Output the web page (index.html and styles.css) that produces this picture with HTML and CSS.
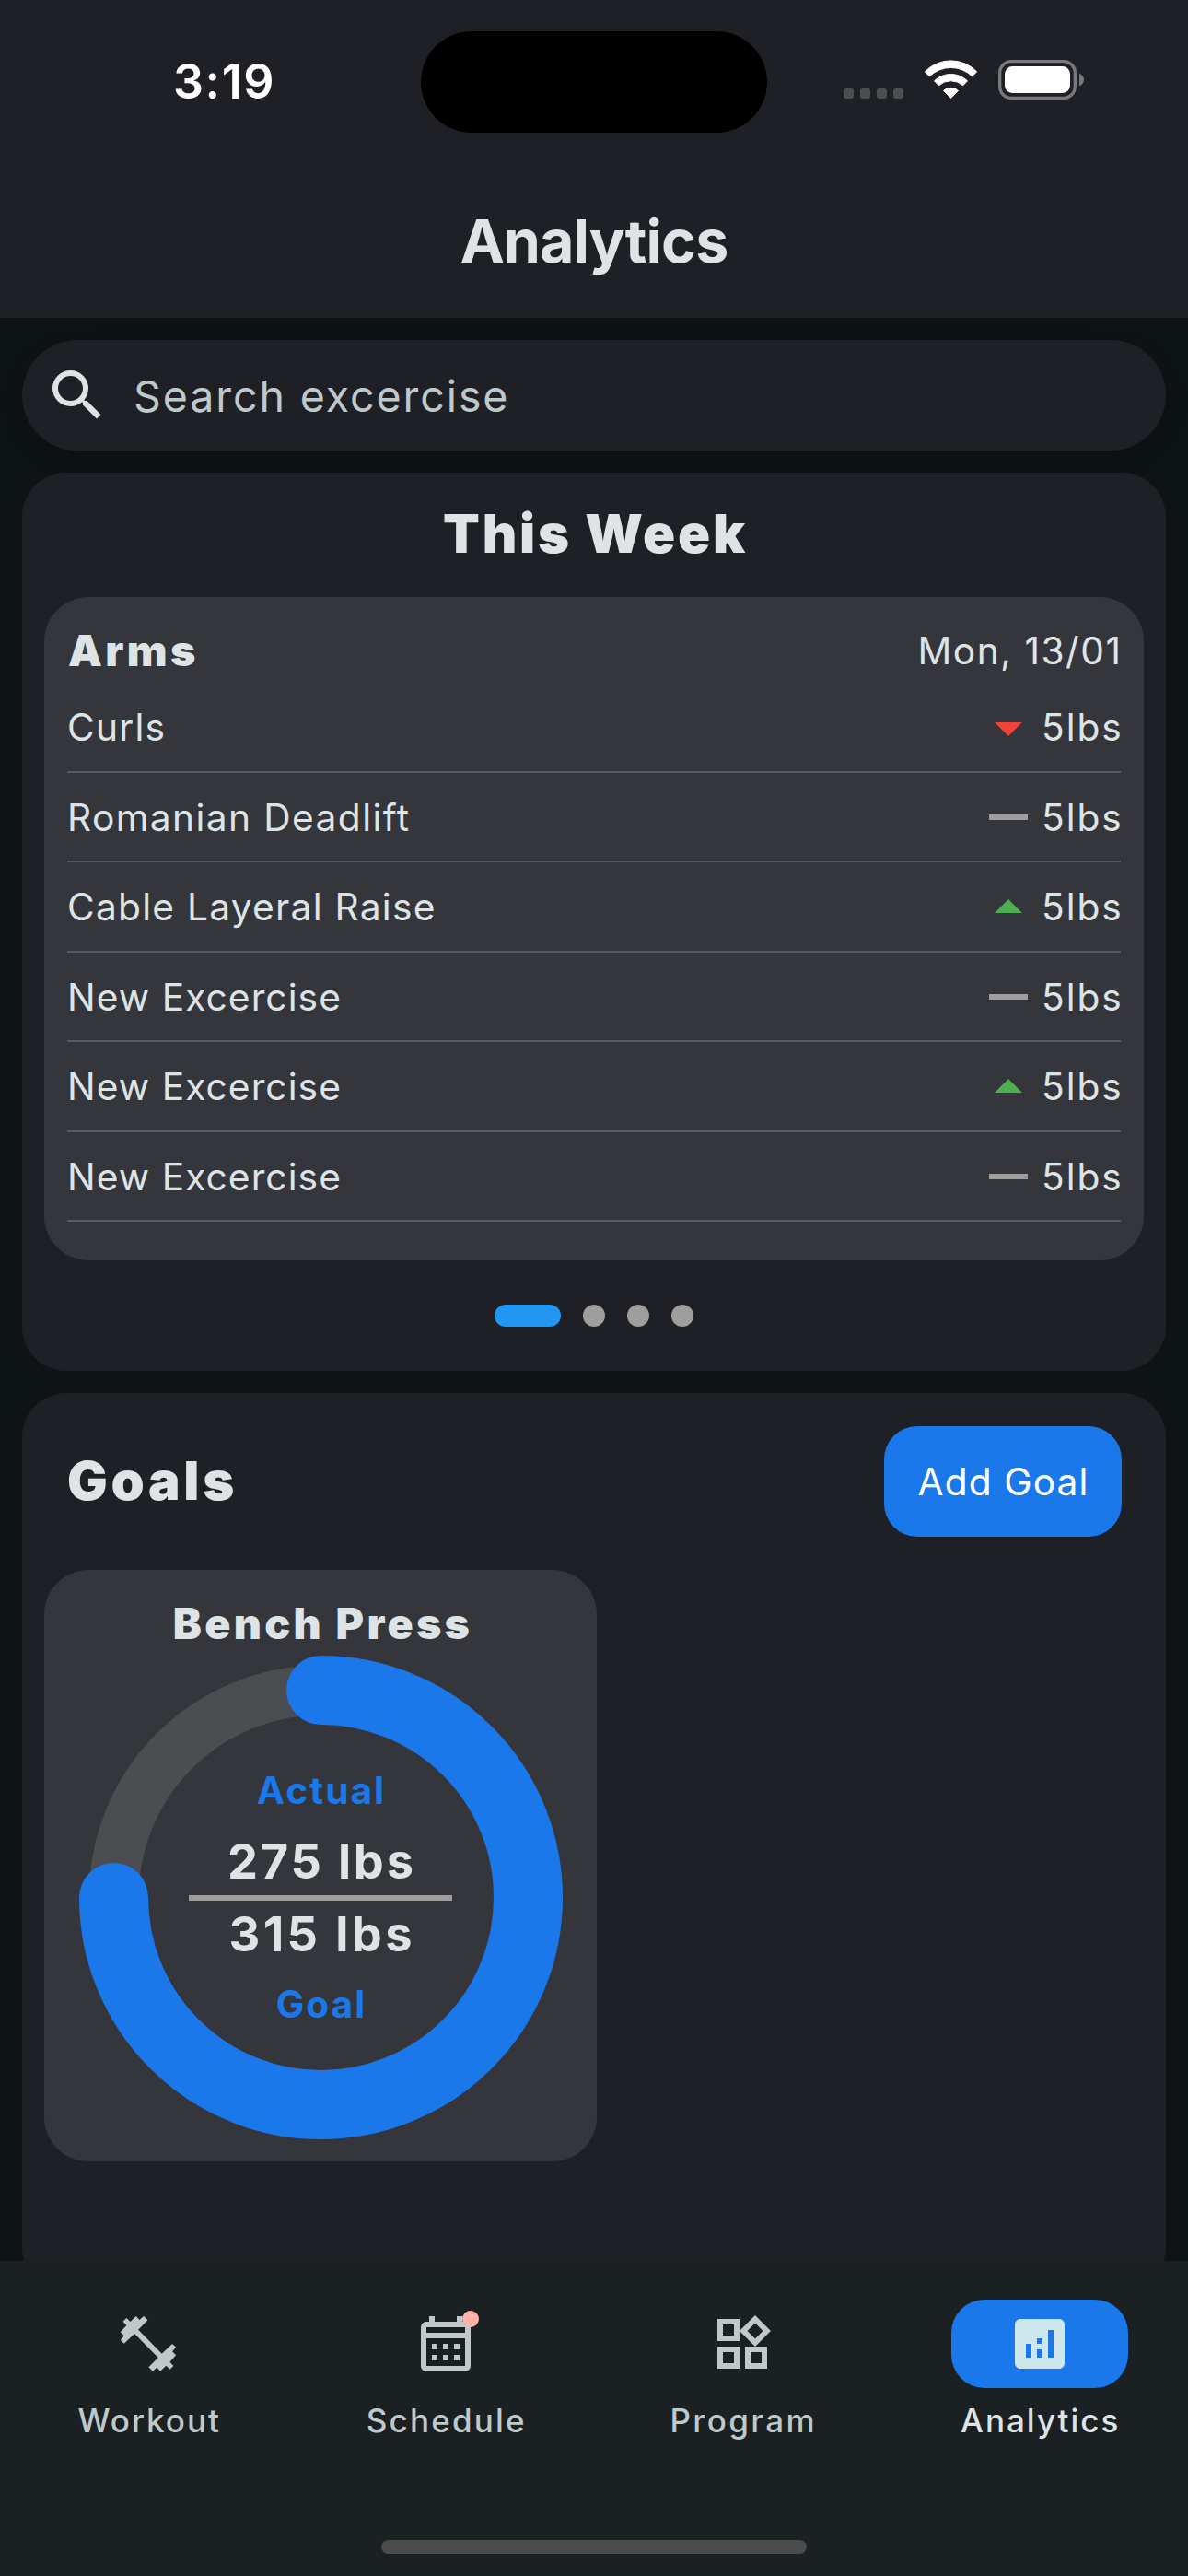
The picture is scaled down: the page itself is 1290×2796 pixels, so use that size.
FILE: index.html
```html
<!DOCTYPE html>
<html lang="en">
<head>
<meta charset="utf-8">
<title>Analytics</title>
<link rel="stylesheet" href="styles.css">
</head>
<body>
<header class="header">
  <div class="status">
    <span class="time">3:19</span>
    <span class="island"></span>
    <svg class="status-icons" viewBox="108 75 783 129">
      <g fill="#4d4e52">
        <rect x="108" y="168" width="33" height="33" rx="9"/><rect x="162" y="168" width="33" height="33" rx="9"/>
        <rect x="216" y="168" width="33" height="33" rx="9"/><rect x="270" y="168" width="33" height="33" rx="9"/>
      </g>
      <g fill="#fff" stroke="#fff" stroke-width="3" stroke-linejoin="round">
        <path d="M373 113.500A117.500 117.500 0 0 1 542 113.500L527 128.500A100 100 0 0 0 388 128.500Z"/>
        <path d="M403.500 143.500A77 77 0 0 1 511.500 143.500L497 158.500A59 59 0 0 0 418 158.500Z"/>
        <path d="M433.500 175.500A35 35 0 0 1 481.500 175.500L457.500 199.500Z"/>
      </g>
      <rect x="617" y="80" width="245" height="119" rx="37" fill="none" stroke="#78797d" stroke-width="10"/>
      <rect x="633" y="96" width="213" height="87" rx="25" fill="#fff"/>
      <path d="M876 119C896 126 896 153 876 160Z" fill="#78797d"/>
    </svg>
  </div>
  <h1 class="title">Analytics</h1>
</header>

<main class="content">
  <div class="search">
    <svg class="icon" viewBox="0 0 24 24" fill="#dee3e5"><path d="M15.500 14h-.79l-.28-.27A6.471 6.471 0 0 0 16 9.500 6.500 6.500 0 1 0 9.500 16c1.610 0 3.090-.59 4.230-1.570l.27.28v.79l5 4.990L20.490 19l-4.990-5zm-6 0C7.010 14 5 11.990 5 9.500S7.010 5 9.500 5 14 7.010 14 9.500 11.990 14 9.500 14z"/></svg>
    <span class="search-hint">Search excercise</span>
  </div>

  <section class="card">
    <h2 class="card-title week-title">This Week</h2>
    <div class="day">
      <div class="day-head"><h3 class="subtitle">Arms</h3><span class="date">Mon, 13/01</span></div>
      <div class="row"><span class="name">Curls</span><svg class="icon down" viewBox="0 0 24 24"><path d="M7 10l5 5 5-5z"/></svg><span class="value">5lbs</span></div>
      <div class="divider"></div>
      <div class="row"><span class="name wide">Romanian Deadlift</span><svg class="icon same" viewBox="0 0 24 24"><path d="M5 11h14v2H5z"/></svg><span class="value">5lbs</span></div>
      <div class="divider"></div>
      <div class="row"><span class="name">Cable Layeral Raise</span><svg class="icon up" viewBox="0 0 24 24"><path d="M7 14l5-5 5 5z"/></svg><span class="value">5lbs</span></div>
      <div class="divider"></div>
      <div class="row"><span class="name new">New Excercise</span><svg class="icon same" viewBox="0 0 24 24"><path d="M5 11h14v2H5z"/></svg><span class="value">5lbs</span></div>
      <div class="divider"></div>
      <div class="row"><span class="name new">New Excercise</span><svg class="icon up" viewBox="0 0 24 24"><path d="M7 14l5-5 5 5z"/></svg><span class="value">5lbs</span></div>
      <div class="divider"></div>
      <div class="row"><span class="name new">New Excercise</span><svg class="icon same" viewBox="0 0 24 24"><path d="M5 11h14v2H5z"/></svg><span class="value">5lbs</span></div>
      <div class="divider"></div>
    </div>
    <div class="dots"><i class="dot active"></i><i class="dot"></i><i class="dot"></i><i class="dot"></i></div>
  </section>

  <section class="card goals">
    <div class="goals-head"><h2 class="card-title goals-title">Goals</h2><button class="add">Add Goal</button></div>
    <div class="goal">
      <h3 class="subtitle goal-title">Bench Press</h3>
      <div class="ring">
        <svg class="ring-art" viewBox="0 0 525 525" fill="none">
          <circle cx="262.500" cy="262.500" r="225" stroke="#4c4d50" stroke-width="54"/>
          <path d="M262.500 37.500A225 225 0 1 1 37.500 262.500" stroke="#1b78eb" stroke-width="75" stroke-linecap="round"/>
        </svg>
        <div class="ring-text">
          <span class="label">Actual</span>
          <span class="amount">275 lbs</span>
          <span class="bar"></span>
          <span class="amount target">315 lbs</span>
          <span class="label">Goal</span>
        </div>
      </div>
    </div>
  </section>
</main>

<nav class="nav">
  <a class="tab"><span class="pill"><svg class="icon" viewBox="15.750 24 216 216" fill="#bfc8ca"><path d="M79 99L45 131 33 120 45 106 33 94 53 72 41 59 53 48 65 60 84 42 95 54 109 42 122 55 91 86 168 164 202 132 214 143 202 157 214 169 194 191 206 204 194 215 182 203 163 221 152 209 138 221 125 208 156 177Z"/></svg></span><span class="tab-label workout">Workout</span></a>
  <a class="tab"><span class="pill"><svg class="icon" viewBox="0 0 24 24" fill="#bfc8ca"><path d="M19 4h-1V2h-2v2H8V2H6v2H5c-1.110 0-1.990.9-1.990 2L3 20c0 1.100.89 2 2 2h14c1.100 0 2-.9 2-2V6c0-1.100-.9-2-2-2zm0 16H5V10h14v10zm0-12H5V6h14v2zM9 14H7v-2h2v2zm4 0h-2v-2h2v2zm4 0h-2v-2h2v2zm-8 4H7v-2h2v2zm4 0h-2v-2h2v2zm4 0h-2v-2h2v2z"/></svg><i class="badge"></i></span><span class="tab-label schedule">Schedule</span></a>
  <a class="tab"><span class="pill"><svg class="icon" viewBox="0 0 24 24" fill="#bfc8ca"><path d="M16.660 4.520l2.830 2.830-2.830 2.830-2.830-2.830 2.830-2.830M9 5v4H5V5h4m10 10v4h-4v-4h4M9 15v4H5v-4h4m7.660-13.310L11 7.340 16.660 13l5.660-5.660-5.660-5.650zM11 3H3v8h8V3zm10 10h-8v8h8v-8zm-10 0H3v8h8v-8z"/></svg></span><span class="tab-label program">Program</span></a>
  <a class="tab selected"><span class="pill"><svg class="icon" viewBox="0 0 24 24" fill="#cee7ec"><path d="M19 3H5c-1.100 0-2 .9-2 2v14c0 1.100.9 2 2 2h14c1.100 0 2-.9 2-2V5c0-1.100-.9-2-2-2zM9 17H7v-5h2v5zm4 0h-2v-3h2v3zm0-5h-2v-2h2v2zm4 5h-2V7h2v10z"/></svg></span><span class="tab-label analytics">Analytics</span></a>
  <i class="home"></i>
</nav>
</body>
</html>
```
FILE: styles.css
```css
* { box-sizing: border-box; }
body {
  margin: 0;
  width: 1290px;
  height: 2796px;
  overflow: hidden;
  display: flex;
  flex-direction: column;
  background: #0e1416;
  color: #dee3e5;
  font-family: Inter, "Liberation Sans", sans-serif;
  font-size: 40.7px;
}
h1, h2, h3 { margin: 0; }
.icon { display: block; width: 72px; height: 72px; flex: none; }

.header { height: 345px; flex: none; background: #1f2025; }
.status {
  height: 177px;
  display: grid;
  grid-template-columns: 457px 376px 457px;
  align-items: center;
}
.time { padding-left: 188px; font-size: 52px; font-weight: 600; letter-spacing: 1.5px; color: #fff; }
.island { height: 110px; margin-top: 1px; border-radius: 56px; background: #000; }
.status-icons { width: 261px; height: 43px; margin: 0 0 4px 83px; }
.title {
  height: 168px;
  line-height: 170px;
  text-align: center;
  font-size: 64.5px;
  font-weight: 700;
  letter-spacing: -.92px;
}

.content {
  flex: 1;
  min-height: 0;
  overflow: hidden;
  padding: 24px 24px 0;
  display: flex;
  flex-direction: column;
  gap: 24px;
}
.search {
  height: 120px;
  flex: none;
  display: flex;
  align-items: center;
  gap: 25px;
  padding-left: 24px;
  border-radius: 60px;
  background: #1f2025;
  box-shadow: 0 9px 24px rgba(0, 0, 0, .25);
}
.search-hint { padding-top: 2px; font-size: 46.5px; letter-spacing: 1.92px; color: #bfc8ca; }

.card {
  height: 975px;
  flex: none;
  padding: 0 24px;
  border-radius: 48px;
  background: #1f2025;
}
.card-title { font-size: 58px; font-weight: 900; letter-spacing: 2.8px; }
.week-title { height: 135px; line-height: 132px; text-align: center; padding-left: 3px; }
.subtitle { font-size: 46.5px; font-weight: 900; letter-spacing: 3.3px; }

.day { height: 720px; padding: 12px 24px 0; border-radius: 48px; background: #35363b; }
.day-head { height: 93.5px; display: flex; align-items: center; justify-content: space-between; }
.day-head .subtitle { padding-bottom: 2px; margin-left: 2px; }
.date { letter-spacing: 1.5px; margin-right: -.5px; }
.row { height: 72px; display: flex; align-items: center; }
.name { flex: 1; padding-left: 1px; letter-spacing: 1.25px; }
.name.wide { letter-spacing: 1.4px; }
.name.new { letter-spacing: 1.07px; }
.value { width: 87px; letter-spacing: 1.9px; white-space: nowrap; }
.down { fill: #f44336; }
.up { fill: #4caf50; }
.same { fill: #9e9e9e; }
.divider { height: 25.5px; padding: 11.45px 1px 0; }
.divider::after { content: ""; display: block; height: 2px; background: #595a5e; }

.dots { height: 120px; display: flex; align-items: center; justify-content: center; gap: 24px; }
.dot { width: 24px; height: 24px; border-radius: 12px; background: #9e9e9e; }
.dot.active { width: 72px; background: #2196f3; }

.goals { padding-top: 36px; }
.goals-head {
  height: 120px;
  margin: 0 24px 36px;
  display: flex;
  align-items: center;
  justify-content: space-between;
}
.goals-title { padding: 0 0 2px 1px; letter-spacing: 3.7px; }
.add {
  width: 258px;
  height: 120px;
  padding: 0 0 0 1px;
  border: 0;
  border-radius: 36px;
  background: #1b78eb;
  color: #fff;
  font: 400 40.7px Inter, "Liberation Sans", sans-serif;
  letter-spacing: 1.1px;
}
.goal { width: 600px; height: 642px; border-radius: 48px; background: #35363b; }
.goal-title { height: 93px; line-height: 116px; text-align: center; padding-left: 5px; }
.ring { display: grid; justify-content: center; align-items: center; }
.ring-art, .ring-text { grid-area: 1 / 1; }
.ring-art { display: block; width: 525px; height: 525px; }
.ring-text { display: flex; flex-direction: column; align-items: center; }
.label { height: 79.5px; line-height: 79.5px; font-weight: 700; letter-spacing: 2px; margin-right: -2px; color: #1b78eb; }
.amount { height: 73px; line-height: 73px; font-size: 52.3px; font-weight: 700; letter-spacing: 2.8px; margin-right: -2.8px; }
.target { letter-spacing: 3.4px; margin-right: -3.4px; }
.bar { width: 286px; height: 6px; background: #9e9e9e; }

.nav {
  position: relative;
  height: 342px;
  flex: none;
  padding-top: 42px;
  display: grid;
  grid-template-columns: repeat(4, 1fr);
  background: #1b2023;
  color: #bfc8ca;
}
.tab { display: flex; flex-direction: column; align-items: center; gap: 12px; }
.pill {
  position: relative;
  width: 192px;
  height: 96px;
  display: flex;
  align-items: center;
  justify-content: center;
  border-radius: 36px;
}
.selected .pill { background: #1b78eb; }
.badge { position: absolute; left: 114px; top: 12px; width: 18px; height: 18px; border-radius: 50%; background: #ffb4ab; }
.tab-label { padding-left: 2px; line-height: 47px; font-size: 35px; font-weight: 500; letter-spacing: 2.2px; }
.program { letter-spacing: 2.45px; }
.workout, .analytics { letter-spacing: 2px; }
.selected .tab-label { color: #dee3e5; }
.home { position: absolute; left: 414px; bottom: 24px; width: 462px; height: 15px; border-radius: 8px; background: #4b4b4b; }
```
